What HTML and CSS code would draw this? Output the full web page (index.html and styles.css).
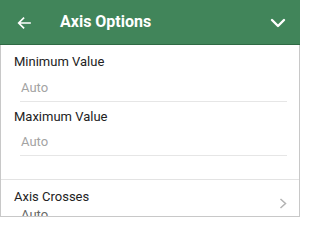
FILE: index.html
```html
<!DOCTYPE html>
<html>
<head>
<meta charset="utf-8">
<link rel="stylesheet" href="styles.css">
</head>
<body>
<div class="app">
  <header class="bar">
    <svg class="back" width="14" height="12" viewBox="0 0 14 12"><path d="M13 6H2M6.5 1.2L1.7 6l4.8 4.8" fill="none" stroke="#fff" stroke-width="1.7" stroke-linecap="square"/></svg>
    <h1 class="title">Axis Options</h1>
    <svg class="down" width="16" height="10" viewBox="0 0 16 10"><path d="M2 2l6 6 6-6" fill="none" stroke="#fff" stroke-width="2.4" stroke-linecap="round" stroke-linejoin="round"/></svg>
  </header>
  <main class="panel">
    <div class="field">
      <div class="label">Minimum Value</div>
      <div class="input">Auto</div>
    </div>
    <div class="field">
      <div class="label">Maximum Value</div>
      <div class="input">Auto</div>
    </div>
    <div class="item">
      <div class="item-text">
        <div class="label">Axis Crosses</div>
        <div class="value">Auto</div>
      </div>
      <svg class="chev" width="8" height="11" viewBox="0 0 8 11"><path d="M1.5 1l5 4.5-5 4.5" fill="none" stroke="#b3b3b3" stroke-width="1.5"/></svg>
    </div>
  </main>
</div>
</body>
</html>
```
FILE: styles.css
```css
html, body {
  margin: 0;
  padding: 0;
  background: #fff;
}
body {
  font-family: Roboto, "Liberation Sans", sans-serif;
  width: 300px;
  height: 217px;
  overflow: hidden;
}
.app {
  display: flex;
  flex-direction: column;
  height: 217px;
}
.bar {
  height: 44px;
  flex: none;
  background: #41855a;
  border-bottom: 1px solid #2f6a44;
  display: flex;
  align-items: center;
  box-sizing: content-box;
}
.back {
  margin-left: 17px;
  margin-top: 1px;
  flex: none;
}
.title {
  margin: 0 0 0 29px;
  font-size: 16px;
  font-weight: 700;
  color: #fff;
  line-height: 20px;
  flex: 1;
}
.down {
  margin-right: 14px;
  margin-top: 1px;
  flex: none;
}
.panel {
  flex: 1;
  min-height: 0;
  border: 1px solid #c8c8c8;
  border-top: none;
  overflow: hidden;
  padding-top: 9px;
  box-sizing: border-box;
}
.label {
  font-size: 13px;
  line-height: 16px;
  color: #222;
  padding-left: 13px;
}
.field {
  margin-bottom: 7px;
}
.input {
  font-size: 13px;
  line-height: 16px;
  color: #a3a3a3;
  margin: 10px 12px 0 19px;
  padding: 0 0 5px 1px;
  border-bottom: 1px solid #e6e6e6;
}
.field + .field .input {
  margin-top: 9px;
}
.field + .field {
  margin-bottom: 23px;
}
.item {
  border-top: 1px solid #e3e3e3;
  padding-top: 9px;
  display: flex;
  align-items: center;
}
.item-text {
  flex: 1;
}
.value {
  font-size: 13px;
  line-height: 16px;
  color: #666;
  padding-left: 20px;
  margin-top: 2px;
}
.chev {
  margin-right: 12px;
  margin-bottom: 6px;
  flex: none;
}
```
